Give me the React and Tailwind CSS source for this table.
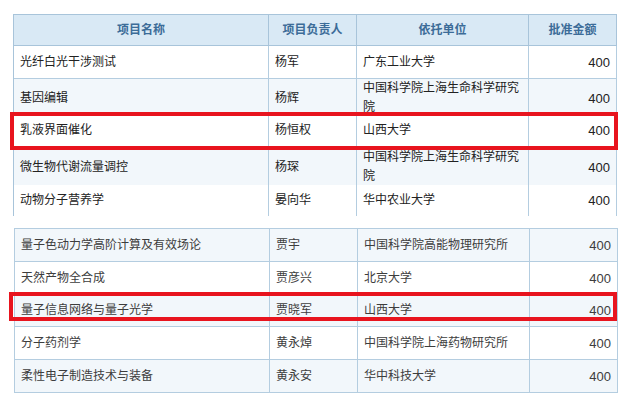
import React from "react";

const cols = "grid grid-cols-[255px_88px_172px_88px]";
const font = { fontFamily: '"Liberation Sans", "Noto Sans CJK SC", sans-serif' };

const tableA = [
  { name: "光纤白光干涉测试", lead: "杨军", org: "广东工业大学", h: "h-[33px]" },
  { name: "基因编辑", lead: "杨辉", org: "中国科学院上海生命科学研究院", h: "h-[35px]" },
  { name: "乳液界面催化", lead: "杨恒权", org: "山西大学", h: "h-[34px]" },
  { name: "微生物代谢流量调控", lead: "杨琛", org: "中国科学院上海生命科学研究院", h: "h-[37px]" },
  { name: "动物分子营养学", lead: "晏向华", org: "华中农业大学", h: "h-[31px]" },
];

const tableB = [
  { name: "量子色动力学高阶计算及有效场论", lead: "贾宇", org: "中国科学院高能物理研究所", h: "h-[33px]" },
  { name: "天然产物全合成", lead: "贾彦兴", org: "北京大学", h: "h-[33px]" },
  { name: "量子信息网络与量子光学", lead: "贾晓军", org: "山西大学", h: "h-[32px]" },
  { name: "分子药剂学", lead: "黄永焯", org: "中国科学院上海药物研究所", h: "h-[33px]" },
  { name: "柔性电子制造技术与装备", lead: "黄永安", org: "华中科技大学", h: "h-[33px]" },
];

function Row({ row, light, last, soft }) {
  const bg = light ? "bg-[#f2f7fb]" : "bg-white";
  const txt = soft ? "text-[#3d3d3d]" : "text-[#222]";
  const cell = `border-r border-[#b4cde0] ${last ? "" : "border-b"} flex items-center ${bg}`;
  return (
    <div className={`${cols} ${row.h} text-[12px] leading-[19px] ${txt}`}>
      <div className={`${cell} pl-[6px]`}>{row.name}</div>
      <div className={`${cell} pl-[6px]`}>{row.lead}</div>
      <div className={`${cell} pl-[6px] pr-[8px]`}>{row.org}</div>
      <div className={`${cell} justify-end pr-[6px] text-[13px]`}>400</div>
    </div>
  );
}

export default function App() {
  const headers = ["项目名称", "项目负责人", "依托单位", "批准金额"];
  return (
    <div className="relative w-[631px] h-[397px] overflow-hidden bg-white" style={font}>
      <div className="pt-[14px] pl-[13px]">
        <div className="w-[604px] border-l border-t border-[#a8c4da]">
          <div className={`${cols} h-[31px] bg-[#d9e9f5]`}>
            {headers.map((h) => (
              <div
                key={h}
                className="flex items-center justify-center border-r border-b border-[#a8c4da] text-[12px] font-bold text-[#3c6c98]"
              >
                {h}
              </div>
            ))}
          </div>
          {tableA.map((r, i) => (
            <Row key={r.name} row={r} light={i % 2 === 1} last={i === tableA.length - 1} />
          ))}
        </div>

        <div className="mt-[12px] ml-[1px] w-[604px] border-l border-t border-[#b4cde0]">
          {tableB.map((r, i) => (
            <Row key={r.name} row={r} light={i % 2 === 0} soft />
          ))}
        </div>
      </div>

      <div className="absolute left-[10px] top-[112px] w-[608px] h-[38px] border-4 border-[#e8141e]" />
      <div className="absolute left-[9px] top-[292px] w-[608px] h-[29px] border-4 border-[#e8141e]" />
    </div>
  );
}
